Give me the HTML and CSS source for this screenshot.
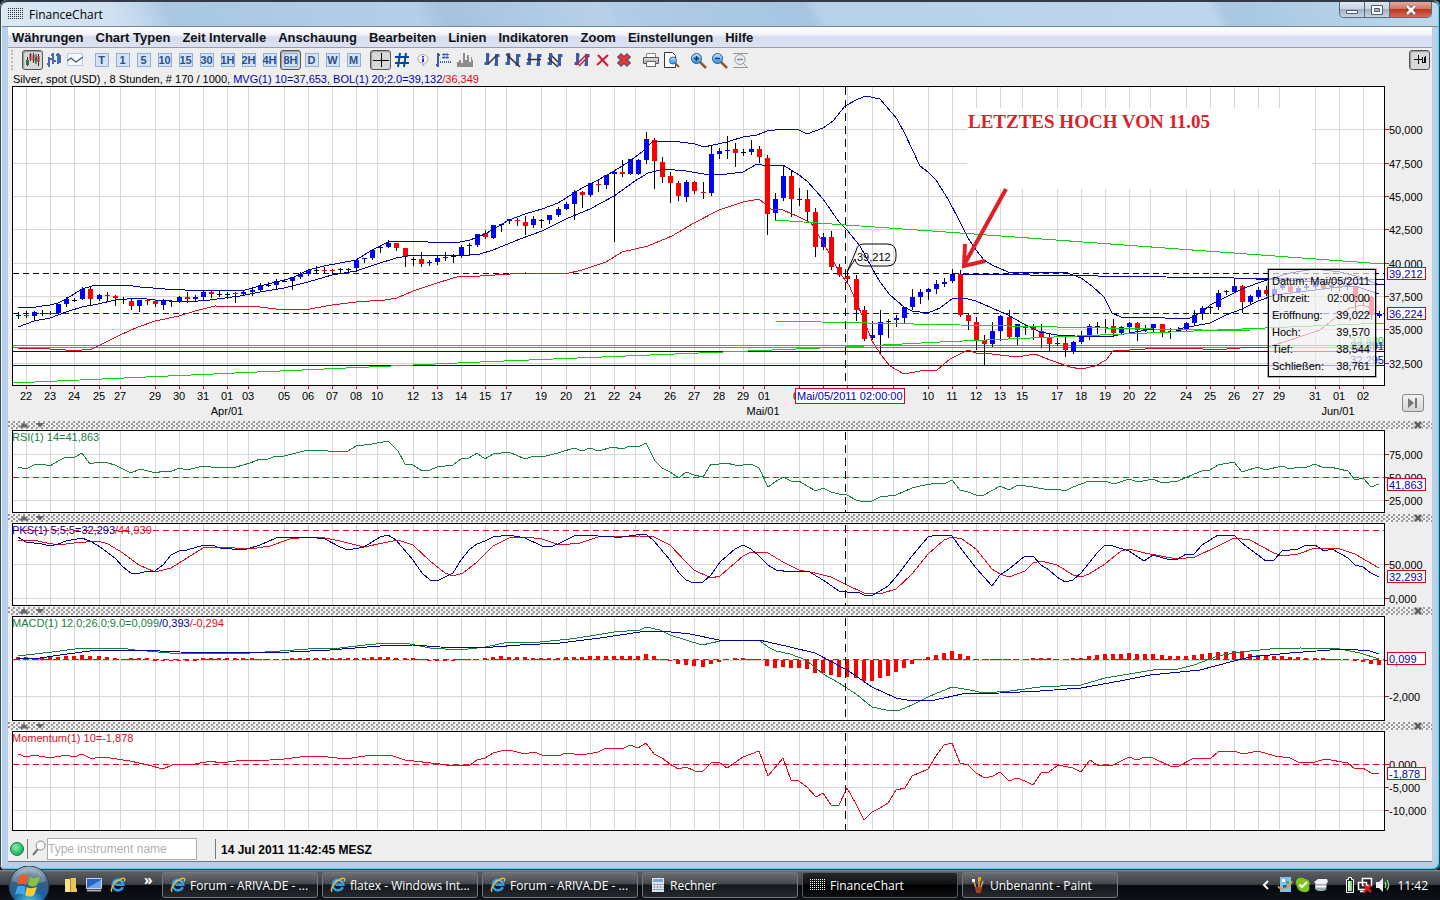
FILE: index.html
```html
<!DOCTYPE html>
<html lang="de">
<head>
  <meta charset="UTF-8" />
  <meta name="viewport" content="width=device-width, initial-scale=1" />
  <title>FinanceChart</title>
  <link rel="stylesheet" href="styles.css">
</head>
<body>

<!-- Shared icons -->
<svg class="sprite" aria-hidden="true">
  <defs>
    <linearGradient id="lens" x1="0" y1="0" x2="0" y2="1"><stop offset="0" stop-color="#c4e8ff"/><stop offset="1" stop-color="#2f8ad8"/></linearGradient>
    <linearGradient id="battery" x1="0" y1="0" x2="1" y2="0"><stop offset="0" stop-color="#e5ffe5"/><stop offset="1" stop-color="#69d069"/></linearGradient>
    <radialGradient id="orb" cx=".5" cy=".95" r=".9"><stop offset="0" stop-color="#4fd5f5"/><stop offset=".45" stop-color="#1c5f9c"/><stop offset=".8" stop-color="#40607c"/><stop offset="1" stop-color="#9fb3c4"/></radialGradient>
  </defs>
  <symbol id="ie" viewBox="0 0 18 18">
    <path d="M14.5 11.5A6 6 0 1 1 15 8.7H6" fill="none" stroke="#2e9be8" stroke-width="3"/>
    <path d="M4 6.5A6 6 0 0 1 14 6" fill="none" stroke="#8ed6ff" stroke-width="1"/>
    <path d="M2.500 16.500C-1 15 5 6 11 3c4-2.500 7-2 5 2" fill="none" stroke="#f5b820" stroke-width="1.600"/>
  </symbol>
  <symbol id="dots" viewBox="0 0 16 12">
    <path d="M0 .5h16M0 2.500h16M0 4.500h16M0 6.500h16M0 8.500h16M0 10.500h16" stroke="currentColor" stroke-dasharray="1 1"/>
  </symbol>
  <symbol id="bars" viewBox="0 0 16 16">
    <path d="M3.500 1v12M.5 11.500h3M3.500 3.500h2M12.500 2v12M10.500 12.500h2M12.500 3.500h3" stroke="#3c5ca8" stroke-width="3"/>
  </symbol>
</svg>

<main class="window">
  <header class="titlebar">
    <svg class="app-icon" width="16" height="12"><use href="#dots"/></svg>
    <h1>FinanceChart</h1>
    <div class="window-buttons">
      <button aria-label="Minimieren"><svg width="12" height="12" viewBox="0 0 12 12"><path d="M.5 6.500h11v3H.5z" fill="#fff" stroke="#555b70"/></svg></button>
      <button aria-label="Maximieren"><svg width="12" height="10" viewBox="0 0 12 10"><path d="M.5.5h11v9H.5z" fill="#fff" stroke="#555b70"/><path d="M3.500 3.500h5v3h-5z" fill="#a9b6c8" stroke="#555b70"/></svg></button>
      <button class="close" aria-label="Schließen"><svg width="12" height="10" viewBox="0 0 12 10"><path d="M2 1l8 8M10 1L2 9" stroke="#6b3a40" stroke-width="4"/><path d="M2 1l8 8M10 1L2 9" stroke="#fff" stroke-width="2.500"/></svg></button>
    </div>
  </header>

  <nav class="menubar">
    <a href="#">Währungen</a>
    <a href="#">Chart Typen</a>
    <a href="#">Zeit Intervalle</a>
    <a href="#">Anschauung</a>
    <a href="#">Bearbeiten</a>
    <a href="#">Linien</a>
    <a href="#">Indikatoren</a>
    <a href="#">Zoom</a>
    <a href="#">Einstellungen</a>
    <a href="#">Hilfe</a>
  </nav>

  <div class="toolbar">
    <div class="group">
      <button class="on" aria-label="Kerzen"><svg width="16" height="16" viewBox="0 0 16 16"><path d="M2.500 5v9M8.500 1v10M13.500 2v12M5.500 1v8M11 2v10" stroke="#333"/><path d="M1 8h3v5H1z" fill="#287a3c"/><path d="M4.500 2h2v6h-2zM7.500 3h2v6h-2zM12.500 4h2v6h-2z" fill="#a32c38"/><path d="M10 5h2v5h-2z" fill="#287a3c"/></svg></button>
      <button aria-label="Balken"><svg width="16" height="16" viewBox="0 0 16 16"><path d="M3 5v10M1 12h2M3 7h3M7 1v11M5 3h2M7 9h3M12 1v11M10 3h4M14 3v8" fill="none" stroke="#4668b4" stroke-width="2"/></svg></button>
      <button aria-label="Linie"><svg width="16" height="16" viewBox="0 0 16 16"><path d="M.5 1.500h15v12H.5z" fill="#f4f8ff" stroke="#b7cbe8"/><path d="M0 9l4-3 5 4 7-5" fill="none" stroke="#47536c" stroke-width="1.200"/></svg></button>
    </div>
    <div class="group intervals">
      <button><span>T</span></button>
      <button><span>1</span></button>
      <button><span>5</span></button>
      <button><span>10</span></button>
      <button><span>15</span></button>
      <button><span>30</span></button>
      <button><span>1H</span></button>
      <button><span>2H</span></button>
      <button><span>4H</span></button>
      <button class="on"><span>8H</span></button>
      <button><span>D</span></button>
      <button><span>W</span></button>
      <button><span>M</span></button>
    </div>
    <div class="group">
      <button class="on" aria-label="Fadenkreuz"><svg width="18" height="16" viewBox="0 0 18 16"><path d="M9.500 1v14M1 8.500h16" stroke="#000"/></svg></button>
      <button aria-label="Raster"><svg width="16" height="16" viewBox="0 0 16 16"><path d="M6 1L4 15M12 1l-2 14M1 5h14M1 11h14" stroke="#0c4696" stroke-width="2"/></svg></button>
      <button aria-label="Info"><svg width="14" height="16" viewBox="0 0 14 16"><path d="M7 2.500c3 0 5 2 5 4.500S10 11 9 11l-2 3v-3C4 11 2 9.500 2 7s2-4.500 5-4.500z" fill="#f8f8f8" stroke="#aaa"/><path d="M7 4v1.500M7 6.500V10" stroke="#3528cc" stroke-width="2"/></svg></button>
      <button aria-label="Werte"><svg width="17" height="16" viewBox="0 0 17 16"><path d="M3 1v14M1 13h2M3 3h2" stroke="#3c5ca8" stroke-width="2"/><path d="M9 1v6M12 1v6M7 2.500h7M7 5.500h7" stroke="#3c5ca8"/><path d="M5 10h12" stroke="#3c5ca8" stroke-width="2" stroke-dasharray="1 1"/></svg></button>
      <button aria-label="Volumen"><svg width="16" height="16" viewBox="0 0 16 16"><path d="M0 15v-5h2V8h2v3h2V1h2v7h2V3h2v7h2V5h1v3h1v7z" fill="#8c8c8c"/></svg></button>
    </div>
    <div class="group">
      <button aria-label="Trendlinie"><svg width="16" height="16"><use href="#bars"/><path d="M4 12l9-9" stroke="#333" stroke-width="1.500"/></svg></button>
      <button aria-label="Strahl"><svg width="16" height="16"><use href="#bars"/><path d="M1 2l14 13" stroke="#333" stroke-width="1.500"/></svg></button>
      <button aria-label="Horizontale"><svg width="16" height="16"><use href="#bars"/><path d="M1 7.500h14" stroke="#333" stroke-width="1.500"/></svg></button>
      <button aria-label="Kanal"><svg width="16" height="16"><use href="#bars"/><path d="M1 6l10 9M5 4l6 6" stroke="#333" stroke-width="1.500"/></svg></button>
    </div>
    <div class="group">
      <button aria-label="Linie bearbeiten"><svg width="16" height="16"><use href="#bars"/><path d="M2 13L13 2M5 14L15 4" stroke="#c3203c" stroke-width="1.500"/></svg></button>
      <button aria-label="Linie entfernen"><svg width="14" height="14" viewBox="0 0 14 14"><path d="M2 2l10 11M12 2L1 12" stroke="#d01c34" stroke-width="2"/></svg></button>
      <button aria-label="Alle entfernen"><svg width="16" height="16" viewBox="0 0 16 16"><path d="M3 3l10 10M13 3L3 13" stroke="#3a4878" stroke-width="6"/><path d="M3.500 3.500l9 9M12.500 3.500l-9 9" stroke="#e0383a" stroke-width="4"/></svg></button>
    </div>
    <div class="group">
      <button aria-label="Drucken"><svg width="16" height="16" viewBox="0 0 16 16"><path d="M3.500 1.500h9v4h-9z" fill="#fff" stroke="#888"/><path d="M.5 5.500h15v6H.5z" fill="#bbb" stroke="#555"/><path d="M3.500 9.500h9v5h-9z" fill="#fff" stroke="#666"/><path d="M1 7h14" stroke="#eee"/></svg></button>
      <button aria-label="Vorschau"><svg width="17" height="16" viewBox="0 0 17 16"><path d="M1.500.5h8l3 3v12h-11z" fill="#fff" stroke="#333"/><path d="M12 11l4 4" stroke="#8b5b32" stroke-width="2"/><circle cx="10" cy="8.500" r="3.500" fill="url(#lens)" stroke="#2a68a8"/></svg></button>
    </div>
    <div class="group">
      <button aria-label="Vergrößern"><svg width="17" height="17" viewBox="0 0 17 17"><path d="M10 10l6 6" stroke="#8b5b32" stroke-width="2.500"/><circle cx="6.500" cy="6.500" r="5" fill="url(#lens)" stroke="#1c5aa0"/><path d="M4 6.500h5M6.500 4v5" stroke="#15326a" stroke-width="1.500"/></svg></button>
      <button aria-label="Verkleinern"><svg width="17" height="17" viewBox="0 0 17 17"><path d="M10 10l6 6" stroke="#8b5b32" stroke-width="2.500"/><circle cx="6.500" cy="6.500" r="5" fill="url(#lens)" stroke="#1c5aa0"/><path d="M4 6.500h5" stroke="#15326a" stroke-width="1.500"/></svg></button>
      <button aria-label="Zoom zurücksetzen"><svg width="17" height="17" viewBox="0 0 17 17"><path d="M1 1.500h15M1 15.500h15M11 11l4 4" stroke="#999"/><circle cx="8" cy="7.500" r="5" fill="#e8edf3" stroke="#999"/><path d="M5 7.500h6" stroke="#888" stroke-width="1.500"/></svg></button>
    </div>
    <button class="on pin" aria-label="Anheften"><svg width="14" height="12" viewBox="0 0 14 12"><path d="M1 5.500h4M5.500 1v9M6 5.500h3M9.500 3v6M11.500 3v6M9 8.500h4M12.500 2v7" stroke="#111"/></svg></button>
  </div>

  <p class="info">Silver, spot (USD) , 8 Stunden, # 170 / 1000, <span class="blue">MVG(1) 10=37,653, BOL(1) 20;2.0=39,132</span><span class="red">/36,349</span></p>

  <section class="main-chart">
    <svg id="price" class="chart" viewBox="8 86 1424 335"></svg>
    <dl class="data-box">
      <div><dt>Datum:</dt><dd>Mai/05/2011</dd></div>
      <div><dt>Uhrzeit:</dt><dd>02:00:00</dd></div>
      <div><dt>Eröffnung:</dt><dd>39,022</dd></div>
      <div><dt>Hoch:</dt><dd>39,570</dd></div>
      <div><dt>Tief:</dt><dd>38,544</dd></div>
      <div><dt>Schließen:</dt><dd>38,761</dd></div>
    </dl>
    <button class="jump-end" aria-label="Zum Ende"><svg width="10" height="10" viewBox="0 0 10 10"><path d="M0 0l6 5-6 5zM7 0h2v10H7z" fill="#777"/></svg></button>
  </section>

  <div class="splitter"><button class="up" aria-label="Hoch"></button><button class="down" aria-label="Runter"></button><button class="remove" aria-label="Entfernen"><svg width="8" height="8" viewBox="0 0 8 8"><path d="M1 1l6 6M7 1L1 7" stroke="#555" stroke-width="2"/></svg></button></div>
  <svg id="rsi" class="chart" viewBox="8 429 1424 85"></svg>

  <div class="splitter"><button class="up" aria-label="Hoch"></button><button class="down" aria-label="Runter"></button><button class="remove" aria-label="Entfernen"><svg width="8" height="8" viewBox="0 0 8 8"><path d="M1 1l6 6M7 1L1 7" stroke="#555" stroke-width="2"/></svg></button></div>
  <svg id="pks" class="chart" viewBox="8 522 1424 85"></svg>

  <div class="splitter"><button class="up" aria-label="Hoch"></button><button class="down" aria-label="Runter"></button><button class="remove" aria-label="Entfernen"><svg width="8" height="8" viewBox="0 0 8 8"><path d="M1 1l6 6M7 1L1 7" stroke="#555" stroke-width="2"/></svg></button></div>
  <svg id="macd" class="chart" viewBox="8 615 1424 107"></svg>

  <div class="splitter"><button class="up" aria-label="Hoch"></button><button class="down" aria-label="Runter"></button><button class="remove" aria-label="Entfernen"><svg width="8" height="8" viewBox="0 0 8 8"><path d="M1 1l6 6M7 1L1 7" stroke="#555" stroke-width="2"/></svg></button></div>
  <svg id="momentum" class="chart" viewBox="8 730 1424 102"></svg>

  <footer class="status">
    <span class="led"></span>
    <label for="instrument" aria-label="Instrument suchen"><svg width="16" height="18" viewBox="0 0 16 18"><path d="M7 10l-5 6" stroke="#777" stroke-width="2"/><circle cx="9.500" cy="6.500" r="4.500" fill="#f8f8f8" stroke="#888"/></svg></label>
    <input id="instrument" type="text" placeholder="Type instrument name">
    <time>14 Jul 2011 11:42:45 MESZ</time>
  </footer>
</main>

<div class="taskbar">
  <button class="start" aria-label="Start">
    <svg width="42" height="34" viewBox="0 0 42 34">
      <circle cx="21" cy="20" r="20" fill="url(#orb)" stroke="#26384a"/>
      <path d="M4 15a18 18 0 0 1 34 0c-9 4-25 4-34 0z" fill="#fff" opacity=".25"/>
      <path d="M12 10c3-2 5-1 8 0l-2 9c-3-1-5-2-9 0z" fill="#ed5a26"/>
      <path d="M22 11c3 2 6 1 10 0l-3 8c-3 2-6 2-9 0z" fill="#86c440"/>
      <path d="M9 21c3-2 6-1 9 0l-2 8c-3-1-6-2-9 0z" fill="#3fa4e8"/>
      <path d="M19 21c3 2 6 1 10 0l-3 8c-3 2-6 2-9 0z" fill="#ffcb2e"/>
    </svg>
  </button>
  <div class="quick">
    <button aria-label="Explorer"><svg width="14" height="16" viewBox="0 0 14 16"><path d="M1 2h5v13H1z" fill="#f7e38e"/><path d="M6 1h6v10l1 1v3H6z" fill="#e9c654"/><path d="M6.500 1v14" stroke="#b48c28"/></svg></button>
    <button aria-label="Desktop"><svg width="16" height="14" viewBox="0 0 16 14"><path d="M.5.5h15v10H.5z" fill="#2c62c4" stroke="#c7d3e6"/><path d="M1 10L15 2v8z" fill="#6aa4ea"/><path d="M1 12.500h14" stroke="#aab" stroke-width="2"/></svg></button>
    <button aria-label="Internet Explorer"><svg width="16" height="16"><use href="#ie"/></svg></button>
    <span>»</span>
  </div>
  <button class="task"><svg width="16" height="16"><use href="#ie"/></svg>Forum - ARIVA.DE - ...</button>
  <button class="task"><svg width="16" height="16"><use href="#ie"/></svg>flatex - Windows Int...</button>
  <button class="task"><svg width="16" height="16"><use href="#ie"/></svg>Forum - ARIVA.DE - ...</button>
  <button class="task"><svg width="16" height="16" viewBox="0 0 16 16"><path d="M2 1h12v14H2z" fill="#dce4ec"/><path d="M3 2h10v3H3z" fill="#7fa8c8"/><path d="M3.500 7.500h10M3.500 10h10M3.500 12.500h10" stroke="#6c7c90" stroke-dasharray="2 1"/></svg>Rechner</button>
  <button class="task active"><svg width="16" height="12"><use href="#dots"/></svg>FinanceChart</button>
  <button class="task"><svg width="16" height="16" viewBox="0 0 16 16"><path d="M3 3l4 10M9 2v11M13 4l-3 9" stroke="#d8a25a" stroke-width="1.500"/><path d="M2 2h3v3H2z" fill="#eee"/><path d="M8 0h3v4H8z" fill="#f39a24"/><path d="M5 10h7l-1 6H6z" fill="#a83a20"/></svg>Unbenannt - Paint</button>
  <div class="tray">
    <svg width="8" height="10" viewBox="0 0 8 10"><path d="M6 1L2 5l4 4" fill="none" stroke="#fff" stroke-width="2"/></svg>
    <svg class="first" width="16" height="16" viewBox="0 0 16 16"><path d="M3 0h11v15H3z" fill="#7cc1f0"/><path d="M5 2h3v3H5z" fill="#fff"/><path d="M9 4h3v3H9z" fill="#59a844"/><path d="M6 8h4v3H6z" fill="#2c62b0"/><path d="M1 9c2 5 12 3 14-5" fill="none" stroke="#e49a3a" stroke-width="1.500"/></svg>
    <svg width="16" height="16" viewBox="0 0 16 16"><path d="M1 4c1-4 6-4 9-2 4 0 6 4 4 7 2 4-2 7-5 6-5 0-8-4-8-11z" fill="#7dc51c"/><path d="M4.500 7.500L7 10l5-5" fill="none" stroke="#fff" stroke-width="2"/></svg>
    <svg width="16" height="14" viewBox="0 0 16 14"><path d="M1 4l4-3h9l1 3-2 2H3z" fill="#eef2f6"/><path d="M2 6h12l-1 6-3 1H5l-3-2z" fill="#9aa7b6"/><path d="M3 8.500h10" stroke="#fff" stroke-width="2"/></svg>
    <svg class="second" width="10" height="16" viewBox="0 0 10 16"><path d="M3.500.5h3v2h2v13h-7v-13h2z" fill="#222" stroke="#fff"/><path d="M3 4h4v10H3z" fill="url(#battery)"/></svg>
    <svg width="16" height="16" viewBox="0 0 16 16"><path d="M5.500 1.500h9v7h-9zM1.500 5.500h8v7h-8zM3 14.500h5" fill="#222" stroke="#fff" stroke-width="1.500"/><path d="M7 8l7 7M14 8l-7 7" stroke="#e01818" stroke-width="2.500"/></svg>
    <svg width="16" height="16" viewBox="0 0 16 16"><path d="M1 5h3l4-4v14l-4-4H1z" fill="#eee"/><path d="M10 5c1 2 1 4 0 6M12 3c2 3 2 7 0 10" fill="none" stroke="#8fe08f" stroke-width="1.300"/></svg>
    <time>11:42</time>
  </div>
</div>

<script src="chart.js"></script>
</body>
</html>
```
FILE: styles.css
```css
:root {
  --face: #eee;
  --blue: #0000a8;
  --red: #d80c20;
  --ui: "Liberation Sans", Arial, sans-serif;
  --shell: "Open Sans", "Segoe UI", sans-serif;
}

* { box-sizing: border-box; margin: 0; padding: 0; }

body {
  display: flex;
  flex-direction: column;
  min-height: 100vh;
  background: #10181c;
  font-family: var(--ui);
  font-size: 11px;
  color: #000;
}

button {
  display: flex;
  align-items: center;
  justify-content: center;
  border: 0;
  background: none;
  font: inherit;
  color: inherit;
}

.sprite { position: absolute; width: 0; height: 0; }
.blue { color: var(--blue); }
.red { color: var(--red); }

/* Window */
.window {
  flex: 1;
  padding: 0 8px 8px;
  border-radius: 7px 7px 6px 6px;
  background: #b5d0e8;
  box-shadow: inset 1px 1px 0 #3c4650, inset 2px 2px 0 #e8f4fc, inset -1px -1px 0 #174e60, inset -2px -2px 0 #52cde8;
}

.titlebar {
  display: flex;
  align-items: center;
  gap: 5px;
  height: 27px;
  margin: 0 -6px;
  padding-left: 6px;
  border-top: 2px solid #303a48;
  border-bottom: 1px solid #71869c;
  border-radius: 6px 6px 0 0;
  background: linear-gradient(65deg, #dce9f5 0, #cfe0f0 8%, #c0d7eb 10%, #a9c7e2 12%, #b4cfe8 29%, #a5c2de 31%, #b8d1e9 42%, #b0cce6 43%, #a7c5e1 56%, #b6d1e9 57%, #bdd6eb 84%, #a8c7e0 85%, #bdd9ec 100%);
}

.titlebar h1 {
  font-family: var(--shell);
  font-size: 12px;
  font-weight: 400;
}

.app-icon { color: #333; }

.window-buttons {
  display: flex;
  align-self: flex-start;
  margin-left: auto;
  margin-right: 6px;
  border: 1px solid #59687a;
  border-top: 0;
  border-radius: 0 0 5px 5px;
  overflow: hidden;
}

.window-buttons button {
  width: 25px;
  height: 15px;
  border-right: 1px solid #59687a;
  background: linear-gradient(#e0e8f0, #c8d4e0 45%, #a0b0c4 50%, #c8d6e4);
}

.window-buttons .close {
  width: 41px;
  border-right: 0;
  background: linear-gradient(#e8a898, #d07868 45%, #b83820 50%, #d86850);
}

.menubar {
  display: flex;
  align-items: center;
  gap: 12px;
  height: 21px;
  padding-left: 4px;
  border-bottom: 1px solid #9a9ab0;
  background: linear-gradient(#fff, #f0f2fa 40%, #d6dcf0 50%, #dde2f2);
}

.menubar a {
  font-size: 13px;
  font-weight: 700;
  color: #111;
  text-decoration: none;
}

.toolbar {
  display: flex;
  align-items: center;
  gap: 6px;
  height: 24px;
  padding: 0 2px 0 3px;
  background: var(--face);
}

/* dotted grip */
.toolbar::before {
  content: "";
  width: 3px;
  height: 20px;
  border-left: 2px dotted #bbb;
}

.group { display: flex; }

.toolbar button {
  width: 21px;
  height: 20px;
}

.toolbar .on {
  border: 1px solid #555;
  border-radius: 3px;
  background: #d8d8d8;
  box-shadow: inset 1px 1px 1px #999;
}

.toolbar .pin { margin-left: auto; }

.intervals span {
  display: flex;
  justify-content: center;
  width: 14px;
  height: 14px;
  border: 1px solid #8fb0dc;
  background: #d4e4f8;
  font-size: 11px;
  font-weight: 700;
  line-height: 12px;
  color: #2c4f88;
}

.info {
  height: 14px;
  padding-left: 5px;
  line-height: 14px;
  background: var(--face);
}

/* Charts */
.chart {
  display: block;
  width: 100%;
  background: var(--face);
  font-family: var(--ui);
  font-size: 11px;
}

.main-chart { position: relative; }

.plot { fill: #fff; stroke: #000; shape-rendering: crispEdges; }
.grid { fill: none; stroke: #d6d6d6; shape-rendering: crispEdges; }
.tick { stroke: #c01028; shape-rendering: crispEdges; }
.line { fill: none; shape-rendering: crispEdges; }
.dash { stroke-dasharray: 6 4; }
.cross { stroke: #000; stroke-dasharray: 8 5; shape-rendering: crispEdges; }
.tag { fill: #fff; stroke: #e00018; shape-rendering: crispEdges; }
.tag-text { fill: #0000b8; }
.note { font-family: "Liberation Serif", serif; font-size: 19px; font-weight: 700; fill: #e02028; }

.data-box {
  position: absolute;
  top: 183px;
  right: 56px;
  width: 108px;
  height: 108px;
  padding: 3px 5px 0 3px;
  border: 1px solid #000;
  outline: 1px solid rgba(0, 0, 0, .3);
  background: rgba(240, 240, 240, .7);
}

.data-box div {
  display: flex;
  justify-content: space-between;
  line-height: 17px;
}

.jump-end {
  position: absolute;
  right: 8px;
  bottom: 9px;
  width: 22px;
  height: 18px;
  border: 1px solid #888;
  border-radius: 3px;
  background: linear-gradient(#f4f4f4, #d4d4d4);
}

.splitter {
  display: flex;
  align-items: center;
  gap: 6px;
  height: 8px;
  padding: 0 10px 0 11px;
  background-color: #f0f0f0;
  background-image: linear-gradient(90deg, #f0f0f0 3px, transparent 3px), linear-gradient(#a4a4a4 1px, transparent 1px), linear-gradient(90deg, #f0f0f0 3px, transparent 3px), linear-gradient(#a4a4a4 1px, transparent 1px);
  background-image: radial-gradient(circle at 1px 1px, #999 1px, transparent 1px), radial-gradient(circle at 1px 1px, #999 1px, transparent 1px);
  background-size: 5px 4px;
  background-position: 0 0, 3px 2px;
}

.splitter .up,
.splitter .down {
  width: 10px;
  height: 5px;
  background: #666;
}

.splitter .up { clip-path: polygon(50% 0, 100% 100%, 0 100%); }
.splitter .down { clip-path: polygon(0 0, 100% 0, 50% 100%); }

.splitter .remove {
  width: 9px;
  height: 8px;
  margin-left: auto;
  background: #ccc;
}

/* Status bar */
.status {
  display: flex;
  align-items: center;
  height: 30px;
  padding: 4px 0 0 2px;
  border-bottom: 1px solid #777;
  background: var(--face);
}

.led {
  width: 14px;
  height: 14px;
  border: 1px solid #137a42;
  border-radius: 50%;
  background: radial-gradient(circle at 40% 35%, #8cf0b4, #20b864 65%);
}

.status label {
  height: 20px;
  margin-left: 3px;
  padding-left: 3px;
  border-left: 1px solid #777;
}

.status input {
  width: 150px;
  height: 22px;
  border: 1px solid #aaa;
  background: #fff;
  font-family: var(--ui);
  font-size: 12px;
}

.status input::placeholder { color: #b0b0b0; }

.status time {
  height: 20px;
  margin-left: 18px;
  padding-left: 5px;
  border-left: 1px solid #777;
  font-size: 12px;
  font-weight: 700;
  line-height: 22px;
}

/* Taskbar */
.taskbar {
  display: flex;
  align-items: center;
  gap: 4px;
  height: 30px;
  padding: 0 12px 0 8px;
  background: linear-gradient(#8a9094 0, #5a5e62 2px, #3c4044 48%, #04080c 52%, #101418);
  font-family: var(--shell);
  font-size: 12px;
  color: #fff;
}

.start { align-self: flex-end; height: 34px; }

.quick {
  display: flex;
  align-items: center;
  gap: 8px;
  width: 104px;
  padding-left: 10px;
}

.quick span { margin: -12px 0 0 10px; font-size: 14px; font-weight: 700; }

.task {
  flex: 0 1 156px;
  justify-content: flex-start;
  gap: 4px;
  height: 26px;
  padding-left: 7px;
  border: 1px solid #74787c;
  border-radius: 3px;
  background: linear-gradient(#6c7074, #44484c 45%, #14181c 50%, #24282c);
  white-space: nowrap;
  overflow: hidden;
}

.task svg { flex: none; }
.task.active { border-color: #55595c; background: linear-gradient(#24282c, #101214 45%, #000 50%, #0c0e10); }

.tray {
  display: flex;
  align-items: center;
  gap: 2px;
  margin-left: auto;
}

.tray .first { margin-left: 5px; }
.tray .second { margin-left: 14px; }
.tray time { margin-left: 4px; }
```
FILE: chart.js
```js
const LEFT = 12, RIGHT = 1384, STEP = 8.053;

// [x, day label]
const days = [
  [26,'22'],[50,'23'],[74,'24'],[99,'25'],[120,'27'],[155,'29'],[179,'30'],[203,'31'],[227,'01'],[248,'03'],
  [284,'05'],[308,'06'],[332,'07'],[356,'08'],[377,'10'],[413,'12'],[437,'13'],[461,'14'],[485,'15'],[506,'17'],
  [541,'19'],[566,'20'],[590,'21'],[614,'22'],[635,'24'],[670,'26'],[694,'27'],[719,'28'],[743,'29'],[764,'01'],
  [799,'03'],[823,''],[847,''],[872,''],[893,''],[928,'10'],[952,'11'],[976,'12'],[1000,'13'],[1022,'15'],
  [1057,'17'],[1081,'18'],[1105,'19'],[1129,'20'],[1150,'22'],[1186,'24'],[1210,'25'],[1234,'26'],[1258,'27'],[1279,'29'],
  [1315,'31'],[1339,'01'],[1363,'02']
];

// colour, body top, body bottom, high, low
const candles = `
k 315 315 312 319|r 315 315 311 318|b 312 316 311 320|b 313 314 310 316|r 313 314 311 315|b 304 313 304 313|b 299 304 297 307|k 300 300 298 302|b 289 299 287 300|r 289 299 287 306
b 295 299 294 301|r 295 295 292 302|r 296 298 295 306|k 299 299 297 304|r 301 306 299 310|b 300 306 300 312|r 300 300 299 305|r 301 304 301 307|b 300 305 299 310|k 301 301 300 307
b 297 302 296 303|r 297 299 292 303|b 297 299 295 301|b 292 297 291 300|r 292 294 291 298|k 294 294 291 297|k 294 294 292 299|r 293 293 292 303|b 292 294 291 296|b 290 292 289 296
b 285 290 283 291|k 285 285 282 287|b 281 285 279 289|k 281 281 279 282|b 277 281 277 290|b 274 277 272 279|b 270 274 270 276|k 270 270 266 273|r 270 270 267 274|r 270 270 269 275
b 269 269 268 273|b 269 269 268 272|b 260 268 259 272|b 258 259 258 263|b 250 258 250 260|b 247 248 246 253|b 243 247 240 248|r 243 248 243 251|r 248 257 248 267|k 259 259 257 266
r 259 264 252 267|b 262 263 260 266|b 258 262 255 265|b 257 257 252 261|k 256 256 254 263|b 247 256 245 258|b 245 246 243 256|b 234 245 234 247|r 233 237 230 239|b 225 238 225 239
b 224 225 224 232|b 219 221 219 224|r 220 221 218 226|r 222 226 216 235|b 219 225 216 228|k 220 220 219 228|b 215 220 215 224|b 209 215 207 217|b 204 209 202 210|b 192 204 190 220
r 192 195 191 208|b 183 195 183 197|r 184 185 180 192|b 175 185 175 189|b 172 174 170 242|r 172 174 160 177|b 159 174 159 175|b 160 174 159 175|b 139 160 132 164|r 140 161 138 189
r 162 177 157 183|r 176 183 172 203|r 183 196 181 201|b 182 197 180 202|r 182 191 181 194|r 192 192 182 199|b 154 193 146 196|b 151 154 148 159|b 150 151 136 159|r 149 153 143 167
k 152 152 149 156|b 149 152 140 155|r 149 157 146 163|r 158 214 155 235|b 199 213 193 220|b 176 198 165 201|r 176 199 171 217|b 199 199 188 206|r 199 212 190 222|r 212 247 208 257
b 237 247 233 250|r 237 267 231 270|r 267 275 264 277|r 276 279 272 283|r 279 310 275 321|r 310 339 306 341|b 335 338 321 340|b 322 335 310 355|k 321 321 319 338|b 318 320 315 327
b 307 318 307 323|b 297 307 289 310|b 292 297 289 304|b 289 292 288 300|b 284 289 280 294|b 282 284 278 287|b 274 281 269 283|r 274 315 270 317|r 315 321 313 330|r 322 340 317 350
r 340 344 335 365|b 331 344 322 347|b 316 331 315 341|r 317 337 310 338|b 324 337 324 345|r 327 327 324 335|r 326 330 324 340|r 331 337 324 348|r 338 344 334 351|b 343 343 338 346
r 343 350 337 357|b 342 352 341 354|b 336 342 331 344|b 326 335 324 340|k 326 326 322 334|r 327 327 319 333|r 326 333 319 337|b 327 333 326 335|b 323 327 322 332|r 323 330 322 341
b 329 330 325 332|b 324 328 324 332|r 324 332 324 337|b 331 332 328 339|k 330 330 327 332|b 323 329 322 331|b 315 323 310 326|b 308 314 306 320|k 307 307 306 314|b 293 307 290 310
b 291 292 290 295|b 286 292 278 292|r 286 302 285 313|b 296 302 295 304|b 290 297 287 299|r 290 294 286 296|b 289 294 286 296|b 285 288 284 290|r 286 292 284 294|b 288 292 286 293
b 286 288 284 290|b 283 287 281 290|r 284 288 283 290|b 285 287 282 291|r 286 288 284 291|b 285 287 283 290|r 287 302 286 310|k 300 300 296 306|r 297 315 296 320|b 314 316 311 318`
  .trim().split(/[|\n]/).map(s => s.split(' '));

const lines = {
  upper: '18,307 30,308 42,306 50,305 58,303 66,299 74,294 82,289 92,286 105,285 125,285 140,287 165,289 185,290 245,290 260,286 276,282 292,278 308,270 324,266 356,260 372,250 388,242 400,241 455,243 470,240 485,234 509,220 525,214 542,209 558,203 566,198 582,188 598,180 614,171 630,161 642,152 652,142 660,141 680,142 695,144 704,147 727,142 743,137 757,135 767,131 783,129 799,130 807,134 823,128 833,121 845,106 858,99 866,96 880,99 897,119 905,134 920,166 928,172 936,180 948,199 960,222 968,238 976,250 984,260 992,265 1008,272 1065,272 1081,278 1092,286 1104,297 1112,313 1121,317 1150,317 1165,318 1178,319 1190,318 1202,312 1210,305 1226,297 1242,289 1258,283 1270,279 1290,273 1315,269 1340,272 1360,277 1379,285',
  middle: '18,327 34,321 50,318 66,312 82,307 98,304 115,300 139,298 155,300 187,302 210,300 240,296 260,292 284,288 308,282 332,275 356,271 377,264 396,258 413,255 470,255 480,254 493,250 520,239 542,231 566,219 590,209 614,196 635,181 648,173 664,169 686,171 704,174 727,174 743,172 757,164 767,166 783,165 799,175 807,181 823,199 839,222 847,230 860,246 872,268 880,282 890,295 904,307 912,311 928,313 940,308 952,299 964,298 976,301 992,308 1008,315 1022,323 1040,332 1057,335 1075,336 1113,336 1129,333 1153,329 1178,329 1194,326 1210,323 1226,315 1242,309 1258,301 1275,295 1300,292 1330,288 1355,286 1379,294',
  lower: '18,349 26,348 50,349 66,350 82,350 92,349 104,343 120,335 138,327 155,321 179,316 195,311 215,306 260,307 284,310 310,309 332,305 356,302 385,300 397,298 413,291 437,283 460,276 480,276 525,273 565,274 582,270 606,262 622,252 648,246 672,236 694,223 719,210 743,202 759,199 771,209 783,210 799,217 811,223 819,236 831,256 839,272 849,285 862,315 872,341 881,355 890,366 904,374 920,371 937,370 950,359 968,350 976,353 992,354 1017,357 1035,354 1050,360 1070,367 1081,369 1095,366 1106,360 1113,351 1130,350 1160,348 1190,348 1215,350 1240,348 1268,347 1290,340 1320,330 1335,318 1350,308 1362,305 1375,309',
  rsi: '18,467 26,469 34,465 42,464 50,466 58,461 66,457 75,457 82,453 90,464 98,462 108,463 115,465 123,469 131,473 140,469 148,471 156,473 163,471 170,472 179,468 187,470 203,466 211,467 236,467 250,463 260,459 268,459 276,456 284,456 308,450 324,450 332,452 348,451 356,446 372,444 388,441 398,451 405,464 413,465 422,471 430,470 437,467 453,465 461,459 469,458 477,453 485,459 493,454 509,452 525,459 534,456 542,457 558,453 574,448 582,451 590,448 598,451 613,447 622,449 630,446 638,447 646,443 655,461 662,468 670,472 679,478 686,472 694,475 703,477 711,464 719,464 726,463 735,465 743,465 751,464 759,468 768,487 775,482 783,477 791,481 799,481 807,486 816,491 823,488 831,492 839,494 847,495 856,500 864,502 872,501 880,497 896,495 912,488 920,486 936,483 946,483 952,480 960,490 968,492 976,495 984,495 1000,486 1009,490 1018,485 1033,487 1049,490 1057,489 1065,491 1073,487 1089,481 1105,481 1114,484 1129,479 1138,482 1153,479 1162,483 1178,481 1194,474 1202,471 1210,470 1218,465 1234,462 1242,472 1258,467 1265,470 1282,466 1290,469 1298,467 1307,467 1315,464 1324,468 1330,467 1348,471 1355,480 1363,478 1371,487 1379,484',
  pksFast: '18,537 26,542 34,543 42,544 50,546 58,544 66,541 82,538 92,542 100,547 115,558 123,567 131,573 140,573 148,571 155,571 163,565 171,555 179,551 187,550 204,545 212,545 220,548 244,550 260,545 276,538 290,537 300,538 308,537 325,539 340,547 348,550 364,547 372,542 380,537 388,535 396,540 413,560 422,573 430,580 437,581 453,573 461,560 469,550 477,544 485,541 493,537 509,535 525,538 542,546 550,547 558,544 574,536 582,535 614,537 622,537 636,535 646,534 654,541 670,560 679,573 686,580 694,583 703,582 711,575 720,562 735,549 743,545 751,549 759,556 768,565 776,570 791,572 808,571 823,580 839,591 847,592 858,592 864,595 873,595 880,591 888,586 896,577 912,556 928,537 936,535 952,536 962,550 976,568 984,577 992,586 1000,575 1009,569 1025,556 1033,556 1041,565 1049,570 1057,577 1065,582 1073,580 1081,573 1097,553 1105,545 1113,546 1129,551 1144,561 1153,555 1170,560 1178,559 1186,554 1194,554 1202,545 1218,535 1234,535 1242,543 1258,555 1266,561 1274,560 1282,551 1298,549 1306,545 1315,545 1324,551 1332,549 1348,558 1355,565 1363,567 1371,573 1379,577',
  pksSlow: '18,541 26,540 34,540 42,542 58,545 74,543 98,541 108,544 123,553 139,565 155,572 171,568 187,558 203,548 219,547 250,549 270,546 290,539 308,537 325,538 340,541 364,547 388,542 398,540 413,545 430,561 445,573 453,576 463,573 477,562 493,546 509,538 525,537 542,539 560,545 580,543 598,537 640,536 654,537 670,545 686,562 694,570 711,578 720,576 728,569 743,556 751,552 768,553 783,562 799,570 815,573 831,577 847,585 864,593 880,594 896,589 912,574 928,554 944,540 952,537 962,539 976,549 992,569 1000,574 1009,577 1025,571 1033,563 1041,561 1057,565 1073,575 1081,577 1089,574 1105,564 1121,551 1129,549 1145,553 1161,556 1177,559 1195,557 1218,546 1234,538 1250,540 1274,553 1282,556 1298,554 1315,548 1340,549 1355,554 1379,568',
  macd: '18,656 35,654 60,651 82,648 120,648 135,650 170,653 250,653 280,651 308,649 340,648 365,645 388,643 410,644 430,648 460,650 485,647 509,642 540,642 570,639 590,636 614,632 640,630 646,627 660,630 670,635 686,640 702,645 720,641 735,640 759,640 768,647 776,651 790,654 806,660 823,674 839,683 856,694 872,707 886,710 900,710 912,705 930,696 952,687 970,690 984,693 1010,691 1040,687 1081,685 1105,678 1129,674 1153,670 1178,669 1194,665 1218,656 1240,652 1270,649 1300,648 1340,649 1360,653 1379,659',
  signal: '18,659 40,658 60,655 90,651 110,650 140,650 180,652 240,653 290,652 330,650 380,646 413,645 440,647 480,648 520,645 560,643 600,638 640,632 662,631 690,634 719,640 759,640 790,647 815,653 847,670 872,687 896,698 912,701 935,700 962,694 1000,693 1040,691 1081,688 1120,681 1150,675 1200,670 1234,661 1250,657 1290,653 1330,650 1345,649 1370,651 1379,654',
  momentum: '18,754 26,757 34,755 50,758 66,755 74,757 82,754 92,759 98,757 110,758 130,761 148,765 163,769 172,765 195,764 211,761 220,763 236,761 270,760 284,759 308,756 320,756 345,759 372,755 390,755 405,760 440,764 453,766 461,765 470,765 477,760 485,758 493,753 501,751 509,750 525,754 534,752 542,755 558,756 566,753 582,755 598,752 606,748 622,749 630,745 638,748 646,743 654,754 662,758 670,764 678,769 686,767 695,771 703,771 711,763 719,762 727,768 743,757 759,751 768,776 783,758 791,780 799,781 807,787 816,797 823,793 831,805 839,805 847,788 856,804 864,820 872,812 880,808 888,803 896,790 905,788 912,776 928,769 936,756 944,745 952,743 960,763 968,765 976,773 985,778 993,776 1000,772 1009,781 1017,778 1025,781 1033,785 1041,773 1049,772 1058,765 1073,768 1081,772 1090,760 1097,765 1113,765 1129,757 1137,760 1145,757 1153,758 1170,766 1179,766 1194,758 1210,759 1218,752 1234,751 1243,754 1258,751 1275,756 1290,758 1300,763 1315,762 1325,759 1348,763 1355,769 1363,768 1371,773 1379,773'
};

const histogram = [
  3,3,2,2,3,3,4,4,5,4,4,3,2,1,2,2,2,-1,-1,-1,-1,-1,-1,2,2,2,2,2,2,2,1,1,1,1,2,2,2,2,2,2,
  2,2,2,2,3,3,3,2,2,2,1,-1,-1,-1,-1,1,1,1,2,3,4,3,3,3,2,2,2,2,3,3,3,4,4,4,4,4,4,4,6,4,
  1,-1,-4,-5,-6,-7,-4,-2,1,2,2,1,1,-6,-8,-7,-8,-8,-9,-13,-13,-15,-17,-17,-18,-21,-21,-18,-16,-12,
  -8,-4,1,3,5,7,9,6,4,1,1,1,1,1,1,1,2,2,2,1,1,2,2,4,5,6,6,6,7,6,6,6,5,4,4,4,5,6,7,8,
  8,9,8,6,5,5,4,4,3,3,2,2,2,1,1,1,-1,-2,-4,-5
];

const blue = '#0000a8', red = '#e00c20', green = '#168040', lime = '#10d010';

const poly = (pts, color) => `<polyline class="line" points="${pts}" stroke="${color}"/>`;
const level = (y, color) => `<rect x="${LEFT + 1}" y="${y}" width="${RIGHT - LEFT - 1}" height="1" fill="${color}"/>`;
const dash = (y, color) => `<path class="line dash" d="M${LEFT + 1} ${y}.5H${RIGHT}" stroke="${color}"/>`;
const cross = (top, bottom) => `<path class="cross" d="M845.5 ${top}V${bottom}"/>`;

function frame(top, bottom, levels) {
  let out = `<rect class="plot" x="${LEFT}.5" y="${top}.5" width="${RIGHT - LEFT}" height="${bottom - top}"/>`;
  days.forEach(([x]) => { out += `<path class="grid" d="M${x}.5 ${top + 1}V${bottom}"/>`; });
  levels.forEach(([y, label]) => {
    out += `<path class="grid" d="M${LEFT + 1} ${y}.5H${RIGHT}"/><path class="tick" d="M${RIGHT + 1} ${y}.5h4"/>`;
    out += `<text x="1389" y="${y + 5}">${label}</text>`;
  });
  return out;
}

function tag(y, label) {
  return `<rect class="tag" x="1387.5" y="${y - 6}.5" width="38" height="12"/><text class="tag-text" x="1389" y="${y + 5}">${label}</text>`;
}

function drawPrice() {
  let out = frame(86, 385, [[129,'50,000'],[163,'47,500'],[196,'45,000'],[229,'42,500'],[263,'40,000'],[296,'37,500'],[329,'35,000'],[363,'32,500']]);
  days.forEach(([x, label]) => {
    out += `<path class="tick" d="M${x}.5 386v3"/><text x="${x}" y="400" text-anchor="middle">${label}</text>`;
  });
  out += '<text x="227" y="415" text-anchor="middle">Apr/01</text><text x="763" y="415" text-anchor="middle">Mai/01</text><text x="1338" y="415" text-anchor="middle">Jun/01</text>';

  out += '<rect x="967" y="108" width="345" height="81" fill="#fff"/>';
  out += level(345, lime) + level(347, lime) + level(351, blue) + level(365, blue);
  out += dash(273, '#000') + dash(313, blue);

  candles.forEach(([c, top, bottom, high, low], i) => {
    const x = Math.round(18 + i * STEP);
    const fill = { k: '#000', r: '#f00', b: '#00f' }[c];
    const h = Math.max(1, bottom - top);
    out += `<rect x="${x}" y="${high}" width="1" height="${low - high}"/>`;
    out += `<rect x="${x - 2}" y="${top}" width="5" height="${h}" fill="${fill}"/>`;
  });

  out += poly(lines.upper, blue) + poly(lines.middle, blue) + poly(lines.lower, red);
  out += poly('13,383 480,362 845,347 940,342 1100,335 1384,323', lime);
  out += poly('775,220 960,233 1384,264', lime) + poly('775,321 960,325 1250,331 1384,331', lime);
  out += poly('961,274 1234,278 1384,280', blue) + poly('1234,278 1384,285', blue);
  out += '<g text-anchor="end"><text x="1384" y="345" fill="#10d010">33,880</text><text x="1384" y="350" fill="#0000c0">33,391</text><text x="1384" y="364" fill="#0000c0">32,295</text></g>';

  // crosshair, callout and date
  out += cross(87, 385);
  out += '<path d="M847 272l9-21q1-7 8-7h23q9 0 9 9v4q0 9-9 9h-23q-8 0-9-7z" fill="none" stroke="#000"/><text x="857" y="261">39,212</text>';
  out += '<rect class="tag" x="795.5" y="388.5" width="109" height="15"/><text class="tag-text" x="797" y="400">Mai/05/2011 02:00:00</text>';
  out += tag(273, '39,212') + tag(313, '36,224');

  out += '<text class="note" x="968" y="128">LETZTES HOCH VON 11.05</text>';
  out += '<path d="M1006 189L964 265M965 244l-1 22 21-5" fill="none" stroke="#e02028" stroke-width="4"/>';
  return out;
}

function drawRsi() {
  return frame(430, 512, [[454,'75,000'],[477,'50,000'],[500,'25,000']])
    + dash(477, red) + poly(lines.rsi, green)
    + cross(432, 512) + tag(484, '41,863')
    + `<text x="12" y="441" fill="${green}">RSI(1) 14=41,863</text>`;
}

function drawPks() {
  return frame(523, 605, [[564,'50,000'],[598,'0,000']])
    + dash(530, red) + poly(lines.pksSlow, red) + poly(lines.pksFast, blue)
    + cross(525, 605) + tag(576, '32,293')
    + `<text x="12" y="534" fill="${blue}">PKS(1) 5;5;5=32,293<tspan fill="${red}">/44,939</tspan></text>`;
}

function drawMacd() {
  let out = frame(616, 720, [[660,'0,000'],[696,'-2,000']]);
  out += dash(659, red);
  histogram.forEach((v, i) => {
    const x = Math.round(16 + i * STEP);
    out += `<rect x="${x}" y="${v > 0 ? 660 - v : 660}" width="4" height="${Math.abs(v)}" fill="#f00"/>`;
  });
  return out + poly(lines.macd, green) + poly(lines.signal, blue)
    + cross(618, 720) + tag(658, '0,099')
    + `<text x="12" y="627" fill="${green}">MACD(1) 12.0;26.0;9.0=0,099<tspan fill="${blue}">/0,393</tspan><tspan fill="${red}">/-0,294</tspan></text>`;
}

function drawMomentum() {
  return frame(731, 830, [[764,'0,000'],[787,'-5,000'],[810,'-10,000']])
    + dash(764, red) + poly(lines.momentum, red)
    + cross(733, 830) + tag(773, '-1,878')
    + `<text x="12" y="742" fill="${red}">Momentum(1) 10=-1,878</text>`;
}

document.getElementById('price').innerHTML = drawPrice();
document.getElementById('rsi').innerHTML = drawRsi();
document.getElementById('pks').innerHTML = drawPks();
document.getElementById('macd').innerHTML = drawMacd();
document.getElementById('momentum').innerHTML = drawMomentum();
```
